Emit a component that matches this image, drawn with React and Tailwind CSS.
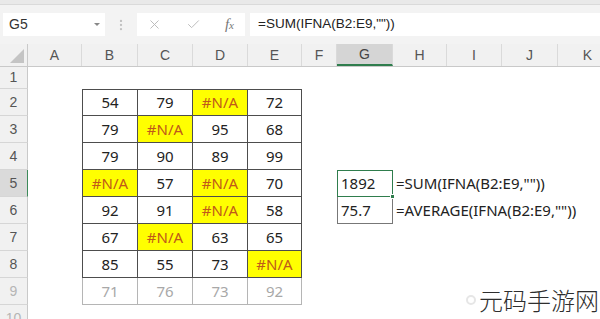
import { X, Check, EllipsisVertical } from 'lucide-react';

const cols = ['A', 'B', 'C', 'D', 'E', 'F', 'G', 'H', 'I', 'J', 'K'];
const widths = ['w-[54px]', 'w-[56px]', 'w-[55px]', 'w-[55px]', 'w-[54px]', 'w-[35px]', 'w-[56px]', 'w-[54px]', 'w-[55px]', 'w-[56px]', 'w-[60px]'];

const data = [
  ['54', '79', '#N/A', '72'],
  ['79', '#N/A', '95', '68'],
  ['79', '90', '89', '99'],
  ['#N/A', '57', '#N/A', '70'],
  ['92', '91', '#N/A', '58'],
  ['67', '#N/A', '63', '65'],
  ['85', '55', '73', '#N/A'],
  ['71', '76', '73', '92'],
];

function TableCell({ value, row, col }) {
  const faded = row === 9;
  const na = value === '#N/A';
  let cls = 'h-full flex items-center justify-center border-r border-b ';
  cls += faded ? 'border-[#b5b5b5] text-[#a8a8a8] ' : 'border-[#4d4d4d] text-[#222] ';
  if (row === 2) cls += 'border-t ';
  if (col === 1) cls += 'border-l ';
  if (na) cls += 'bg-[#ffff00] text-[#c0591a] ';
  return <div className={cls}>{value}</div>;
}

function Cell({ row, col }) {
  if (row >= 2 && row <= 9 && col >= 1 && col <= 4) {
    return <TableCell value={data[row - 2][col - 1]} row={row} col={col} />;
  }
  if (col === 6 && row === 5) {
    return (
      <div className="relative h-full flex items-center pl-[3px] border border-[#2f7d4d] text-[#222]">
        1892
        <span className="absolute -bottom-[3px] -right-[3px] w-[5px] h-[5px] bg-[#2f7d4d] border border-white" />
      </div>
    );
  }
  if (col === 6 && row === 6) {
    return <div className="h-full flex items-center pl-[3px] border-x border-b border-[#777] text-[#222]">75.7</div>;
  }
  if (col === 7 && row === 5) {
    return <div className="h-full flex items-center pl-[3px] whitespace-nowrap text-[#222]">=SUM(IFNA(B2:E9,""))</div>;
  }
  if (col === 7 && row === 6) {
    return <div className="h-full flex items-center pl-[3px] whitespace-nowrap text-[#222]">=AVERAGE(IFNA(B2:E9,""))</div>;
  }
  return <div className="h-full" />;
}

function Row({ row }) {
  const height = row === 1 ? 'h-[22px]' : 'h-[27px]';
  const active = row === 5;
  const faded = row >= 9;
  return (
    <div className={`flex ${height}`}>
      <div
        className={`w-[28px] shrink-0 flex items-center justify-center border-b border-[#d6d6d6] font-['Liberation_Sans',sans-serif] text-[14px] ${
          active ? 'bg-[#dadada] border-r border-r-[#3c8a5a] text-[#444]' : 'bg-[#f1f1f1] border-r border-r-[#c9c9c9]'
        } ${faded ? 'text-[#b5b5b5]' : 'text-[#555]'}`}
      >
        {row}
      </div>
      {cols.map((c, i) => (
        <div key={c} className={`${widths[i]} shrink-0 h-full`}>
          <Cell row={row} col={i} />
        </div>
      ))}
    </div>
  );
}

export default function App() {
  const rows = [1, 2, 3, 4, 5, 6, 7, 8, 9, 10];
  return (
    <div className="relative w-[600px] h-[319px] overflow-hidden bg-white font-['Noto_Sans',sans-serif]">
      {/* toolbar */}
      <div className="h-[5px] bg-[#e9e9e9] border-b border-[#dadada]" />
      <div className="h-[39px] bg-[#f3f3f3] flex items-center font-['Liberation_Sans',sans-serif]">
        <div className="ml-[3px] w-[102px] h-[23px] bg-white flex items-center justify-between pl-[6px] pr-[5px] text-[14px] text-[#333]">
          <span>G5</span>
          <span className="w-0 h-0 border-x-[3px] border-x-transparent border-t-[3px] border-t-[#888]" />
        </div>
        <div className="w-[32px] flex justify-center text-[#c2c2c2]">
          <EllipsisVertical size={14} strokeWidth={2} />
        </div>
        <div className="w-[108px] h-[23px] bg-white flex items-center justify-between pl-[10px] pr-[11px] text-[#b9b9b9]">
          <X size={15} strokeWidth={1.5} />
          <Check size={15} strokeWidth={1.5} />
          <span className="font-['Liberation_Serif',serif] italic text-[15px] text-[#777]">
            f<span className="text-[11px]">x</span>
          </span>
        </div>
        <div className="ml-[5px] flex-1 h-[23px] bg-white flex items-center pl-[8px] text-[13.5px] text-[#222]">
          =SUM(IFNA(B2:E9,""))
        </div>
      </div>
      {/* column headers */}
      <div className="flex h-[23px] bg-[#f1f1f1] border-b border-[#c9c9c9] font-['Liberation_Sans',sans-serif] text-[14px] text-[#555]">
        <div className="relative w-[28px] shrink-0 border-r border-[#c9c9c9]">
          <span className="absolute right-[3px] bottom-[3px] w-0 h-0 border-l-[14px] border-l-transparent border-b-[14px] border-b-[#c4c4c4]" />
        </div>
        {cols.map((c, i) => (
          <div
            key={c}
            className={`${widths[i]} shrink-0 flex items-center justify-center border-r border-[#dadada] ${
              c === 'G' ? 'bg-[#d5d5d5] border-b-2 border-b-[#2f7d4d] text-[#444]' : ''
            }`}
          >
            {c}
          </div>
        ))}
      </div>
      {/* grid */}
      <div className="text-[15px]">
        {rows.map((r) => (
          <Row key={r} row={r} />
        ))}
      </div>
      {/* watermark */}
      <div className="absolute right-[1px] bottom-[6px] flex items-center gap-[3px] bg-white/70 pl-[3px]">
        <span className="w-[10px] h-[10px] rounded-full border-2 border-[#e6e6e6]" />
        <span className="font-['Noto_Sans_CJK_SC',sans-serif] font-light text-[24px] leading-[26px] text-[#2e2e2e]">
          元码手游网
        </span>
      </div>
    </div>
  );
}
